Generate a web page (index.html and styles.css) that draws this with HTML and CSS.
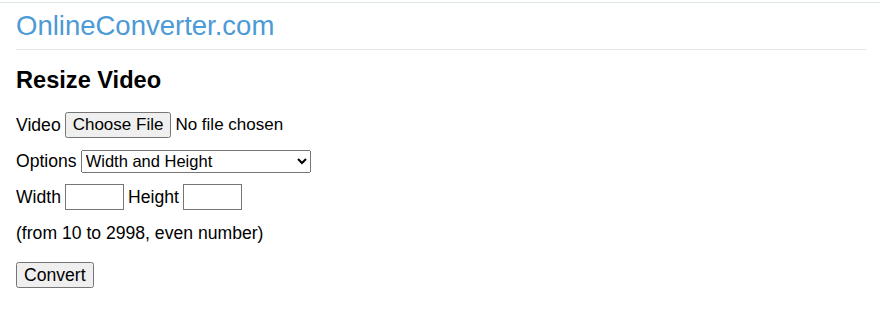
FILE: index.html
```html
<!DOCTYPE html>
<html>
<head>
<meta charset="utf-8">
<link rel="stylesheet" href="styles.css">
</head>
<body>
<div class="topline"></div>
<div class="page">
  <header class="header">
    <a class="brand" href="#">OnlineConverter.com</a>
  </header>
  <h2 class="title">Resize Video</h2>
  <form class="form">
    <div class="row">Video <input type="file" class="file"></div>
    <div class="row">Options <select class="select"><option>Width and Height</option></select></div>
    <div class="row">Width <input type="text" class="num"> Height <input type="text" class="num"></div>
    <div class="row note">(from 10 to 2998, even number)</div>
    <div class="row"><button type="button" class="btn">Convert</button></div>
  </form>
</div>
</body>
</html>
```
FILE: styles.css
```css
html, body { margin: 0; padding: 0; background: #fff; }
body { font-family: "Liberation Sans", Arial, sans-serif; font-size: 17.6px; color: #000; }
.topline { height: 2px; border-bottom: 1px solid #dde6e6; }
.page { padding: 0 14px 0 16px; }
.header { border-bottom: 1px solid #e2e6e6; height: 46px; display: flex; align-items: center; }
.brand { font-size: 27.5px; color: #4c9ad6; text-decoration: none; line-height: 1; }
.title { font-size: 23.6px; font-weight: bold; margin: 16px 0 18px; line-height: 28px; }
.form { display: flex; flex-direction: column; gap: 10px; }
.row { display: flex; align-items: center; gap: 4px; min-height: 26px; }
.file, .select, .num, .btn { font: inherit; }
.file { font-size: 17px; }
.select { width: 230px; height: 23px; font-size: 16.5px; }
.num { width: 59px; height: 26px; padding: 1px 2px; border: 1px solid #767676; box-sizing: border-box; }
.note { margin-bottom: 6px; }
.btn { padding: 1px 6px; height: 26px; }
```
